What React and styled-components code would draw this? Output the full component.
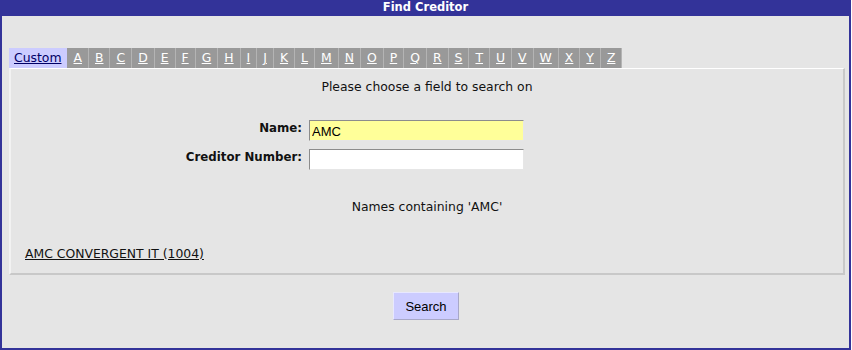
import React, { useState } from 'react'
import styled, { createGlobalStyle } from 'styled-components'

const GlobalStyle = createGlobalStyle`
    html, body {
        margin: 0;
        padding: 0;
        background: #ffffff;
    }
`

const letters = 'ABCDEFGHIJKLMNOPQRSTUVWXYZ'.split('')

const Frame = styled.div`
    width: 851px;
    height: 350px;
    box-sizing: border-box;
    border: 2px solid #333399;
    border-top: none;
    background: #e5e5e5;
    font-family: "DejaVu Sans", Verdana, sans-serif;
    font-size: 12.4px;
    color: #111111;
    display: flex;
    flex-direction: column;
`

const TitleBar = styled.div`
    height: 16px;
    margin: 0 -2px;
    background: #333399;
    color: #ffffff;
    font-weight: bold;
    font-size: 11.5px;
    line-height: 15px;
    text-align: center;
`

const Body = styled.div`
    padding: 32px 4px 0 7px;
    display: flex;
    flex-direction: column;
`

const TabRow = styled.div`
    display: flex;
    height: 20px;
`

const Tab = styled.a`
    display: flex;
    align-items: center;
    padding: 0 ${props => props.$active ? '5px' : '6px'};
    background: ${props => props.$active ? '#ccccff' : '#999999'};
    color: ${props => props.$active ? '#000066' : '#ffffff'};
    border-right: 1px solid ${props => props.$active ? '#ccccff' : '#b4b4b4'};
    text-decoration: underline;
    cursor: pointer;
    line-height: 20px;
`

const Panel = styled.div`
    height: 207px;
    box-sizing: border-box;
    border: 2px solid;
    border-color: #ffffff #c8c8c8 #c8c8c8 #f2f2f2;
    border-top-width: 1px;
    display: flex;
    flex-direction: column;
    align-items: center;
    padding: 11px 14px 0;
`

const Caption = styled.div`
    text-align: center;
    line-height: 14px;
    margin-top: ${props => props.$gap || 0}px;
`

const FormGrid = styled.div`
    align-self: stretch;
    display: grid;
    grid-template-columns: 277px 215px;
    column-gap: 7px;
    row-gap: 8px;
    margin-top: 26px;
    align-items: center;
`

const Label = styled.label`
    font-weight: bold;
    font-size: 11.8px;
    text-align: right;
    align-self: start;
    padding-top: 1px;
`

const Input = styled.input`
    height: 21px;
    box-sizing: border-box;
    border: 1px solid;
    border-color: #8c8c8c #e6e6e6 #e6e6e6 #8c8c8c;
    background: ${props => props.$highlight ? '#ffff99' : '#ffffff'};
    font-family: "Liberation Sans", Arial, sans-serif;
    font-size: 13px;
    padding: 1px 2px 0;
    color: #000000;
    outline: none;
`

const Result = styled.a`
    align-self: stretch;
    margin-top: 32px;
    color: #111111;
    text-decoration: underline;
    cursor: pointer;
`

const Footer = styled.div`
    display: flex;
    justify-content: center;
    padding-top: 17px;
`

const Button = styled.button`
    width: 66px;
    height: 28px;
    background: #ccccff;
    border: 1px solid;
    border-color: #e8e8ff #a8a8c8 #a8a8c8 #e8e8ff;
    font-family: "Liberation Sans", Arial, sans-serif;
    font-size: 13px;
    color: #000000;
    cursor: pointer;
    margin-right: 2px;
`

export default function App() {
    const [name, setName] = useState('AMC')
    const [number, setNumber] = useState('')

    return (
        <>
            <GlobalStyle />
            <Frame>
                <TitleBar>Find Creditor</TitleBar>
                <Body>
                    <TabRow>
                        <Tab $active>Custom</Tab>
                        {letters.map(l => <Tab key={l}>{l}</Tab>)}
                    </TabRow>
                    <Panel>
                        <Caption>Please choose a field to search on</Caption>
                        <FormGrid>
                            <Label>Name:</Label>
                            <Input $highlight value={name} onChange={e => setName(e.target.value)} />
                            <Label>Creditor Number:</Label>
                            <Input value={number} onChange={e => setNumber(e.target.value)} />
                        </FormGrid>
                        <Caption $gap={30}>Names containing '{name}'</Caption>
                        <Result>AMC CONVERGENT IT (1004)</Result>
                    </Panel>
                    <Footer>
                        <Button>Search</Button>
                    </Footer>
                </Body>
            </Frame>
        </>
    )
}
